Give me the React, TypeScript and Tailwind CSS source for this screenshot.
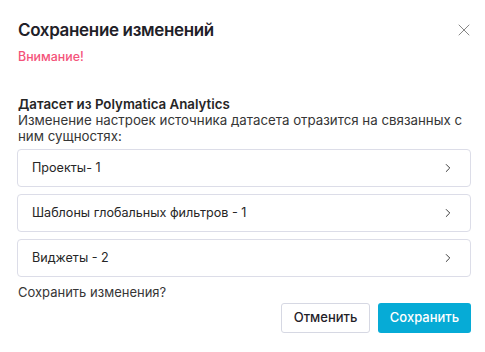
import { ChevronRight, X } from "lucide-react";

const items = ["Проекты- 1", "Шаблоны глобальных фильтров - 1", "Виджеты - 2"];

export default function App() {
  return (
    <div
      className="w-[485px] h-[352px] bg-white pl-[17px] pr-[14px] pt-[18px] text-[#262626]"
      style={{ fontFamily: "Inter, 'Noto Sans', sans-serif" }}
    >
      {/* Header */}
      <div className="flex items-center justify-between h-6">
        <h1 className="pl-px text-[17px] leading-6 font-semibold tracking-[-0.02em] text-[#1f2128]">
          Сохранение изменений
        </h1>
        <button className="mr-[-3px] text-[#6f6f6f]">
          <X size={20} strokeWidth={1} />
        </button>
      </div>

      <p className="pl-px mt-[7px] text-[12.4px] leading-4 font-medium text-[#f4537a]">Внимание!</p>

      {/* Description */}
      <div className="pl-px mt-[31px] text-[13.3px] leading-4">
        <p className="font-semibold text-[#262626]">Датасет из Polymatica Analytics</p>
        <p className="text-[#363636]">Изменение настроек источника датасета отразится на связанных с ним сущностях:</p>
      </div>

      {/* Entity list */}
      <div className="mt-[5px] flex flex-col gap-[7px]">
        {items.map((label) => (
          <div
            key={label}
            className="h-[38px] flex items-center justify-between rounded-[4px] border border-[#dcdde8] pl-[14px] pr-[15px]"
          >
            <span className="text-[12.6px] text-[#262626]">{label}</span>
            <ChevronRight size={14} strokeWidth={1.5} className="text-[#222]" />
          </div>
        ))}
      </div>

      <p className="pl-px mt-[7px] text-[13px] leading-4 text-[#363636]">Сохранить изменения?</p>

      {/* Actions */}
      <div className="mt-[3px] flex justify-end gap-2">
        <button className="h-[30px] w-[89px] rounded-[3px] border border-[#d6d8e3] bg-white text-[13px] font-medium text-[#1f2128]">
          Отменить
        </button>
        <button className="h-[30px] w-[93px] rounded-[3px] bg-[#06abd6] text-[13px] font-medium text-white">
          Сохранить
        </button>
      </div>
    </div>
  );
}
